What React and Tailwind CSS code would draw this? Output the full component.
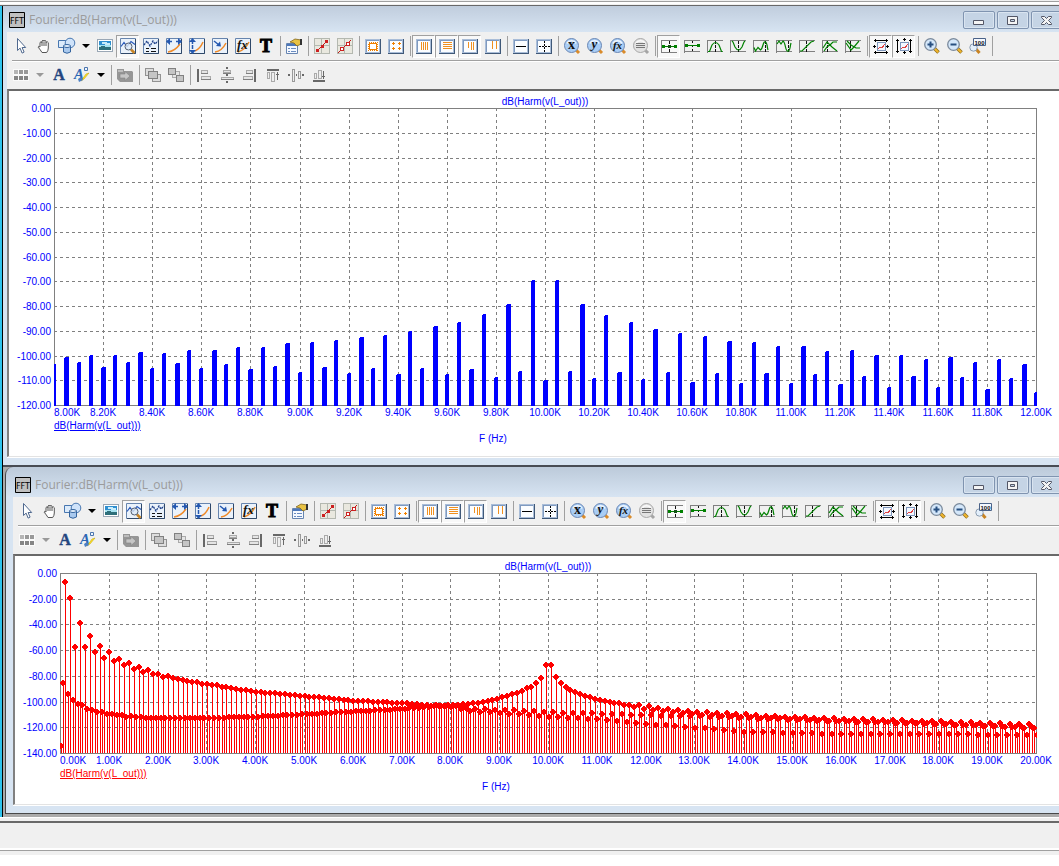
import clsx from 'clsx';

// level of one harmonic series, read off between [kHz, dB] points
const levelAt = (points, f) => {
  const i = points.findIndex(([x]) => x >= f);
  if (i === -1) return points[points.length - 1][1];
  if (i === 0) return points[0][1];
  const [x0, y0] = points[i - 1];
  const [x1, y1] = points[i];
  return y0 + ((y1 - y0) * (f - x0)) / (x1 - x0);
};

// 50 Hz steps from 8 kHz to 12 kHz, dB
const NARROW = [
  -104, -101, -103, -100, -105, -100, -103, -99, -105.5, -99.5, -103.5, -98, -105.5, -98, -104, -97,
  -106, -97, -104.5, -95.5, -107, -95, -105, -94, -107.5, -93, -105.5, -92, -108, -90.5, -105.5, -88.5,
  -108, -87, -106, -83.5, -109, -79.5, -106.5, -70, -110.5, -70, -106.5, -79.5, -109.5, -84, -107, -87,
  -110, -89.5, -107, -91.5, -111, -92.5, -107.5, -94.5, -111.5, -95, -107.5, -96.5, -111.5, -96.5, -108, -98.5,
  -112, -98, -108.5, -100, -113, -100, -108.5, -102, -113, -101, -109, -103, -114, -102, -109.5, -104, -115,
];

const EVEN_A = [[0, -134], [0.2, -19], [0.4, -38], [0.6, -48], [0.8, -56], [1, -61], [1.2, -66], [1.4, -69], [1.6, -72], [1.8, -75], [2, -77.5], [2.4, -81.5], [3, -85.5], [4, -91.5], [5, -95], [6, -98.5], [7, -100.5], [8, -103.5], [8.4, -106.5], [9, -108], [10, -111], [11, -113], [12, -116.5], [13, -119.5], [14, -122.5], [15, -123.5], [16, -124.5], [20, -125]];
const EVEN_B = [[0.1, -6], [0.3, -57], [0.5, -56.5], [0.7, -60.5], [0.9, -65], [1.1, -68], [1.3, -71], [1.5, -73.5], [1.7, -76], [1.9, -77.5], [2.1, -80], [2.5, -82.5], [3, -86], [4, -91.5], [5, -95], [6, -98.5], [7, -100.5], [8, -102.5], [8.5, -105], [9, -105.5], [10, -107.5], [11, -108.5], [12, -110], [13, -110.5], [14, -112], [15, -113.5], [17, -115.5], [18.5, -117.5], [20, -119.5]];
const ODD_A = [[0.05, -85], [0.25, -98], [0.45, -102], [0.65, -106], [1.05, -109], [1.5, -111], [2, -112], [3, -112], [4, -111], [5, -109], [6, -107], [7, -105], [8, -102], [8.5, -100.5], [9, -96.5], [9.3, -93], [9.5, -90], [9.65, -88], [9.75, -85], [9.85, -81], [9.95, -70], [10.05, -71], [10.15, -80], [10.25, -85], [10.35, -88], [10.55, -92], [11, -97.5], [11.5, -101], [12.05, -103], [13, -107], [14, -109], [14.45, -110.5], [16, -112.5], [18, -114.5], [20, -117]];
const ODD_B = [[0.15, -93], [0.35, -101], [0.55, -105], [0.75, -107], [1.15, -110], [1.5, -111.5], [2, -112], [3, -112], [4, -111], [5, -109], [6, -107], [7, -105], [8, -102], [8.5, -100.5], [9, -96.5], [9.3, -93], [9.55, -89], [9.75, -85], [9.95, -70.5], [10.15, -80], [10.35, -88], [10.75, -95], [11, -97.5], [11.5, -101.5], [12.15, -106], [13, -109], [14, -111], [16, -114.5], [18, -116.5], [20, -120]];

const WIDE = Array.from({ length: 401 }, (_, n) => {
  const series = [EVEN_A, ODD_A, EVEN_B, ODD_B][n % 4];
  return levelAt(series, n * 0.05);
});

const LEFT = 45;
const TOP = 17;

const Chart = ({ width, height, plotHeight, xMin, xMax, xStep, yMin, yStep, values, kind, traceClass }) => {
  const plotWidth = width - 68;
  const cols = Math.round((xMax - xMin) / xStep);
  const rows = Math.round(-yMin / yStep);
  const bottom = TOP + plotHeight;
  const xs = Array.from({ length: cols + 1 }, (_, i) => LEFT + Math.round((plotWidth * i) / cols));
  const ys = Array.from({ length: rows + 1 }, (_, i) => TOP + Math.round((plotHeight * i) / rows));
  const points = values.map((v, i) => [
    LEFT + (plotWidth * i) / (values.length - 1),
    TOP + Math.round((plotHeight * v) / yMin),
  ]);
  const clip = `plot-${kind}`;

  return (
    <svg viewBox={`0 0 ${width} ${height}`} className="block h-auto w-full bg-white font-['Liberation_Sans',Arial,sans-serif] text-[10px]" role="img" aria-label="dB(Harm(v(L_out)))">
      <clipPath id={clip}>
        <rect x={LEFT} y={TOP} width={plotWidth + 1} height={plotHeight + 1} />
      </clipPath>
      <g stroke="#808080" fill="none" shapeRendering="crispEdges">
        <g strokeDasharray="3 3">
          {xs.slice(1, -1).map((x) => <path key={x} d={`M${x + 0.5} ${TOP}V${bottom}`} />)}
          {ys.slice(1, -1).map((y) => <path key={y} d={`M${LEFT} ${y + 0.5}H${LEFT + plotWidth}`} />)}
        </g>
        <rect x={LEFT + 0.5} y={TOP + 0.5} width={plotWidth} height={plotHeight} />
      </g>

      <g clipPath={`url(#${clip})`} shapeRendering="crispEdges">
        {kind === 'bars' && points.map(([x, y], i) => {
          const left = Math.round(x - 2);
          const w = i % 3 === 1 ? 5 : 4;
          return (
            <g key={i} fill="#0000ff">
              <rect x={left + 1} y={y - 1} width={w - 1} height="2" />
              <rect x={left} y={y} width={w} height={bottom - y + 1} />
            </g>
          );
        })}
        {kind === 'stems' && points.map(([x, y], i) => {
          const cx = Math.round(x + 0.5);
          return (
            <g key={i} fill="#ff0000">
              <rect x={cx} y={y} width="1" height={bottom - y} />
              <path d={`M${cx - 1} ${y - 2}h2v1h1v1h1v2h-1v1h-1v1h-2v-1h-1v-1h-1v-2h1v-1h1z`} />
            </g>
          );
        })}
      </g>

      <g fill="#0000ff">
        <text x={LEFT + plotWidth / 2} y={TOP - 3} textAnchor="middle">dB(Harm(v(L_out)))</text>
        {ys.map((y, i) => (
          <text key={y} x={LEFT - 3} y={y + 4} textAnchor="end">{i === 0 ? '0.00' : (-i * yStep).toFixed(2)}</text>
        ))}
        {xs.map((x, i) => (
          <text key={x} x={x} y={bottom + 11} textAnchor={i === 0 ? 'start' : 'middle'}>
            {(xMin + i * xStep).toFixed(2)}K
          </text>
        ))}
        <text x={LEFT + plotWidth / 2 - 52} y={bottom + 37} textAnchor="middle">F (Hz)</text>
      </g>
      <text x={LEFT} y={bottom + 24} className={clsx('underline', traceClass)}>dB(Harm(v(L_out)))</text>
    </svg>
  );
};

const Icon = ({ children, crisp }) => (
  <svg width="16" height="16" viewBox="0 0 16 16" fill="none" className="overflow-visible" shapeRendering={crisp ? 'crispEdges' : undefined} aria-hidden="true">
    {children}
  </svg>
);

// small bevelled panel used by the grid and marker icons
const Panel = ({ children }) => (
  <Icon crisp>
    <path d="M0 1h16v15H0z" fill="#3f5878" />
    <path d="M0 1h15v14H0z" fill="#a9bdd8" />
    <path d="M1 2h13v12H1z" fill="#7f9ac0" />
    <path d="M2 3h12v11H2z" fill="#fbfdff" />
    {children}
  </Icon>
);

const Plot = ({ children }) => (
  <Icon>
    <path d="M.5.5h15v15H.5z" fill="#eaf2fb" stroke="#6785ae" />
    <path d="M15.500 1v14.500H1" stroke="#2f4869" />
    {children}
  </Icon>
);

const Wave = ({ d, cursor }) => (
  <Icon crisp>
    <path d="M.5 2v13M1 2.500h15M1 13.500h15" stroke="#808080" />
    <path d={`M${cursor + 0.5} 3v11`} stroke="#111" strokeDasharray="3 1" />
    <path d={d} stroke="#008000" strokeWidth="1.200" shapeRendering="auto" />
  </Icon>
);

const Lens = ({ children, gray }) => (
  <Icon>
    <path d="M12 12l3 3" stroke={gray ? '#a5a5a5' : '#d98b2b'} strokeWidth="3" />
    <circle cx="7.500" cy="7.500" r="7" fill={gray ? '#e2e2e2' : '#a9cdf5'} stroke={gray ? '#a8a8a8' : '#6b87b4'} />
    <path d="M3 5.500a5 5 0 0 1 9 0" stroke="#fff" strokeWidth="1.500" opacity=".8" />
    {children}
  </Icon>
);

const Glass = ({ children }) => (
  <Icon>
    <path d="M10 10l4.500 4.500" stroke="#8a6a1c" strokeWidth="3.600" />
    <path d="M10 10l4.200 4.200" stroke="#f0b52d" strokeWidth="2.200" />
    <circle cx="6.500" cy="6.500" r="5.800" fill="#d4e7fa" stroke="#7b8a9c" strokeWidth="1.300" />
    {children}
  </Icon>
);

const serifItalic = "font-['Liberation_Serif',serif] font-bold italic";

const icons = {
  Select: <Icon><path d="M4.500.5v12l2.600-2.400 2 5 2-1-2-4.600h3.600z" fill="#fff" stroke="#50698f" /></Icon>,
  Pan: (
    <Icon>
      <path d="M4 9V4.500q1-1.500 2 0V3q1-1.500 2 0 1-1.500 2 .3v1q1.500-1.200 2.300.4V10q0 2.500-1.600 4.500H6Q4.500 12 2.200 9.200q0-1.600 1.800-.2z" fill="#fff" stroke="#555" />
      <path d="M6 4v4M8 3.500V8M10 4v4" stroke="#555" />
    </Icon>
  ),
  Shapes: (
    <Icon>
      <path d="M-.5 2.500h10v7h-10z" fill="#dcebfb" stroke="#4877b0" />
      <circle cx="11" cy="5" r="4.800" fill="#cfe3fa" stroke="#4877b0" />
      <path d="M4.500 8v6q3.500 2.500 7 0V8z" fill="#a9c9ee" stroke="#34649e" />
      <ellipse cx="8" cy="8" rx="3.500" ry="1.500" fill="#e6f1fd" stroke="#34649e" />
    </Icon>
  ),
  Picture: (
    <Icon crisp>
      <path d="M0 1h16v13H0z" fill="#9aa7b5" /><path d="M1 2h14v11H1z" fill="#fff" />
      <path d="M2 3h12v9H2z" fill="#2f8fd0" /><path d="M5 4h5v1h3v2H8V6H5z" fill="#c8ecfa" />
      <path d="M2 7h12v2H2z" fill="#a5e2f0" /><path d="M2 9l4-1 3 1h5v3H2z" fill="#2d6f7a" />
    </Icon>
  ),
  Scope: (
    <Plot>
      <path d="M1 8.500l3-4 3 4 4-5 4 3" stroke="#2858b8" strokeWidth="1.200" />
      <path d="M11 11.500l3.500 3.500" stroke="#c78324" strokeWidth="2.500" />
      <circle cx="8.500" cy="8.500" r="3.500" fill="#ddeaf8" fillOpacity=".8" stroke="#555f70" />
    </Plot>
  ),
  Panels: (
    <Plot>
      <path d="M1 7l3-4 3 5 3-5 2 3 3-3" stroke="#1d3f88" strokeDasharray="2 1" strokeWidth="1.300" />
      <path d="M3 10.500h3M8 10.500h5M3 13.500h3M8 13.500h5" stroke="#111" shapeRendering="crispEdges" />
    </Plot>
  ),
  'Fit width': (
    <Plot>
      <path d="M2 14q7-1 12-8" stroke="#f08a28" strokeWidth="1.500" />
      <path d="M1 3.500h5M10 3.500h5" stroke="#2458b0" strokeWidth="1.500" /><path d="M0 3.500l4-3.500v7zM16 3.500l-4-3.500v7z" fill="#2458b0" />
    </Plot>
  ),
  'Fit height': (
    <Plot>
      <path d="M6 13q5-2 8-9" stroke="#f08a28" strokeWidth="1.500" />
      <path d="M3.500 2v12" stroke="#2458b0" strokeDasharray="4 1" strokeWidth="1.500" /><path d="M3.500 0l3.500 4H0zM3.500 16l3.500-4H0z" fill="#2458b0" />
    </Plot>
  ),
  'Scale to point': (
    <Plot>
      <path d="M3 14q7-1 11-9" stroke="#f08a28" strokeWidth="1.500" />
      <path d="M2 3l5 4" stroke="#2458b0" strokeWidth="1.500" /><path d="M9 8.500l-1-5-4 4.500z" fill="#2458b0" />
    </Plot>
  ),
  Function: (
    <Plot>
      <path d="M3 14q7-2 11-10" stroke="#f08a28" strokeWidth="1.500" />
      <text x="2" y="11" className={clsx(serifItalic, 'text-[13px]')} fill="#111">fx</text>
    </Plot>
  ),
  Text: <Icon><text x="8" y="14" textAnchor="middle" className="font-['Liberation_Serif',serif] text-[18px] font-bold" fill="#000" stroke="#000">T</text></Icon>,
  Properties: (
    <Icon>
      <path d="M.5 5.500h11v10H.5z" fill="#f5f9ff" stroke="#6684b0" />
      <path d="M1 7h10" stroke="#4d78bb" strokeWidth="2" /><path d="M2 10.500h2M5 10.500h5M2 13.500h2M5 13.500h5" stroke="#6b8cc0" />
      <path d="M4 4l5-3 6 1v4l-4 2-3-3z" fill="#e8c244" stroke="#80651c" strokeWidth=".8" />
      <path d="M14 1h2v6h-2z" fill="#333" />
    </Icon>
  ),
  'Data points': (
    <Icon crisp>
      <path d="M0 0h16v16H0z" fill="#b4b8b0" /><path d="M1 1h6v6H1zM8 1h7v6H8zM1 8h6v7H1zM8 8h7v7H8z" fill="#e9e8df" />
      <path d="M2 14L14 2" stroke="#c01818" /><path d="M2 11h3v3H2zM7 7h3v3H7zM11 2h3v3h-3z" fill="#cc2020" />
    </Icon>
  ),
  Tokens: (
    <Icon crisp>
      <path d="M0 0h16v16H0z" fill="#b4b8b0" /><path d="M1 1h6v6H1zM8 1h7v6H8zM1 8h6v7H1zM8 8h7v7H8z" fill="#e9e8df" />
      <path d="M1 15L14 2" stroke="#c01818" /><path d="M3.500 9.500h3v3h-3zM9.500 4.500h3v3h-3z" fill="#fff" stroke="#cc2020" />
    </Icon>
  ),
  Ruler: <Panel><path d="M3.500 4.500h9v8h-9z" stroke="#f08000" strokeDasharray="1 1" /><path d="M4.500 5.500h7v6h-7z" stroke="#f08000" fill="#fff" /></Panel>,
  'Plus marks': <Panel><path d="M4 5.500h3M5.500 4v3M10 5.500h3M11.500 4v3M4 10.500h3M5.500 9v3M10 10.500h3M11.500 9v3" stroke="#f08000" /></Panel>,
  'Vertical grid': <Panel><path d="M5.500 4v8M7.500 4v8M9.500 4v8M11.500 4v8" stroke="#f09020" /></Panel>,
  'Horizontal grid': <Panel><path d="M4 4.500h9M4 6.500h9M4 8.500h9M4 10.500h9" stroke="#f09020" /></Panel>,
  'Minor grid': <Panel><path d="M6.500 4v6M9.500 4v8M11.500 4v8" stroke="#f09020" /></Panel>,
  'Minor log grid': <Panel><path d="M7.500 3v8M11.500 3v8" stroke="#f09020" /></Panel>,
  Baseline: <Panel><path d="M3 8.500h10" stroke="#000" /></Panel>,
  Tracker: <Panel><path d="M3 8.500h11M8.500 3v11" stroke="#000" strokeDasharray="2 1" /></Panel>,
  'Find X': <Lens><text x="7.500" y="11" textAnchor="middle" className="font-['Liberation_Serif',serif] text-[14px] font-bold" fill="#111">x</text></Lens>,
  'Find Y': <Lens><text x="7.500" y="10" textAnchor="middle" className={clsx(serifItalic, 'text-[13px]')} fill="#111">y</text></Lens>,
  'Find function': <Lens><text x="7.500" y="11" textAnchor="middle" className={clsx(serifItalic, 'text-[11px]')} fill="#111">fx</text></Lens>,
  'Find list': <Lens gray><path d="M3 5.500h9M3 7.500h9M3 9.500h9" stroke="#777" /></Lens>,
  'Left cursor': <Icon crisp><path d="M.5 2v13M1 2.500h15M1 14.500h15" stroke="#808080" /><path d="M8.500 3v11" stroke="#111" strokeDasharray="3 1" /><path d="M1 8.500h15" stroke="#008000" /><path d="M1 7h3v3H1zM13 7h3v3h-3z" fill="#008000" /><path d="M7 7h3v3H7z" fill="#135013" /></Icon>,
  'Right cursor': <Icon crisp><path d="M.5 2v13M1 2.500h15M1 13.500h15" stroke="#808080" /><path d="M8.500 3v11" stroke="#111" strokeDasharray="2 2" /><path d="M1 7.500h15" stroke="#008000" /><path d="M1 6h3v3H1zM13 6h3v3h-3z" fill="#008000" /></Icon>,
  Peak: <Wave cursor={8} d="M1 13.500h1.500L5 7q3.500-5 7 0l2.500 6.500h1" />,
  Valley: <Wave cursor={8} d="M2 3l1 1 2 5q3.500 6 7 0l2-5 1-1" />,
  High: <Wave cursor={12} d="M1 9.500L2.500 13 5 9.500 7.500 12q1.500-1 2.500-5t2.500-3q1.500 1 2 6l.5 2" />,
  Low: <Wave cursor={12} d="M1 6l2-3 2 3 2-3q1.500 1 2.500 6t3 4q1.500-1 2-6l.5-2" />,
  Inflection: <Wave cursor={7} d="M1 13h2l9-9 3-1" />,
  'Global high': <Wave cursor={5} d="M1 10l4-6 5 5 5 4M2 13l3-4 4-3 2-2h4" />,
  'Global low': <Wave cursor={5} d="M1 5l5 7 3-3 5-6M2 3l4 4 5 3h4" />,
  'Tag horizontal': (
    <Icon crisp>
      <path d="M1 2.500h14M1 14.500h14M0 8.500h3M13 8.500h3M2.500 1v3M13.500 1v3M2.500 13v3M13.500 13v3M1.500 7v3M14.500 7v3" stroke="#000" />
      <path d="M4 4h9v9H4z" fill="#7d95ba" /><path d="M5 5h7v7H5z" fill="#f3f7ff" /><path d="M5 11l2-2 2 1 3-4" stroke="#e04040" />
    </Icon>
  ),
  'Tag vertical': (
    <Icon crisp>
      <path d="M1.500 1v14M14.500 1v14M8.500 0v3M8.500 13v3M0 2.500h3M0 13.500h3M13 2.500h3M13 13.500h3M7 1.500h3M7 14.500h3" stroke="#000" />
      <path d="M4 4h9v9H4z" fill="#7d95ba" /><path d="M5 5h7v7H5z" fill="#f3f7ff" /><path d="M5 11l2-2 2 1 3-4" stroke="#e04040" />
    </Icon>
  ),
  'Zoom in': <Glass><path d="M6.500 3.500v6M3.500 6.500h6" stroke="#274f80" strokeWidth="2" /></Glass>,
  'Zoom out': <Glass><path d="M3.500 6.500h6" stroke="#274f80" strokeWidth="2" /></Glass>,
  'Zoom 100': (
    <Icon>
      <path d="M6 11l3.500 4" stroke="#c88322" strokeWidth="3" />
      <circle cx="3.500" cy="9.500" r="3.700" fill="#e3effb" stroke="#8b9cb0" />
      <path d="M3.500.5h12v7h-12z" fill="#f4f8ff" stroke="#4b6288" />
      <text x="9.500" y="6.500" textAnchor="middle" className="font-['Liberation_Sans',Arial,sans-serif] text-[6px] font-bold" fill="#111">100</text>
    </Icon>
  ),
  Colors: <Icon crisp><path d="M0 2h16v12H0z" fill="#fafafa" /><path d="M1 3h4v4H1z" fill="#b5b5b5" /><path d="M6 3h4v4H6zM11 3h4v4h-4z" fill="#999" /><path d="M1 9h4v4H1zM6 9h4v4H6zM11 9h4v4h-4z" fill="#858585" /></Icon>,
  Font: <Icon><text x="8" y="13" textAnchor="middle" className="font-['Liberation_Serif',serif] text-[16px] font-bold" fill="#23457f" stroke="#23457f" strokeWidth=".4">A</text></Icon>,
  'Text style': (
    <Icon>
      <text x="0" y="12" className={clsx(serifItalic, 'text-[15px]')} fill="#2c66b4">A</text>
      <path d="M10.500.5h3v3h-3z" fill="#eef5ff" stroke="#4c76ae" />
      <path d="M15 6l-5 6-3 2 5-7z" fill="#ffe026" stroke="#bda000" strokeWidth=".5" /><path d="M4 12l3-2 2 3-4 2z" fill="#4b7fc4" />
    </Icon>
  ),
  Send: <Icon><path d="M0 2h7v2h8l1 1v10H3L0 12z" fill="#969696" /><path d="M1 3h5v2H1z" fill="#bdbdbd" /><path d="M3 7h5V4.500l5 4.500-5 4.500V11H3z" fill="#c6c6c6" stroke="#858585" strokeWidth=".6" /></Icon>,
  'Bring front': <Icon crisp><path d="M.5 1.500h8v7h-8zM7.500 7.500h8v7h-8z" fill="#ddd" stroke="#929292" /><path d="M3.500 4.500h9v7h-9z" fill="#c5c5c5" stroke="#808080" /></Icon>,
  'Send back': <Icon crisp><path d="M4.500 4.500h7v6h-7z" fill="#e5e5e5" stroke="#aaa" /><path d="M.5 1.500h7v6h-7zM8.500 8.500h7v6h-7z" fill="#c5c5c5" stroke="#808080" /></Icon>,
  'Align left': <Icon crisp><path d="M2 2v13" stroke="#686868" strokeWidth="2" /><path d="M5.500 3.500h6v3h-6zM5.500 9.500h9v3h-9z" fill="#e5e5e5" stroke="#aaa" /><path d="M5 6.500h7M5 12.500h10" stroke="#808080" /></Icon>,
  'Align center': <Icon crisp><path d="M8 0v2M8 7v2M8 14v2" stroke="#686868" strokeWidth="2" /><path d="M4.500 3.500h7v2h-7zM2.500 10.500h12v2h-12z" fill="#e5e5e5" stroke="#aaa" /><path d="M4 6.500h8M2 12.500h13" stroke="#808080" /></Icon>,
  'Align right': <Icon crisp><path d="M13 2v13" stroke="#686868" strokeWidth="2" /><path d="M4.500 3.500h6v3h-6zM1.500 9.500h9v3h-9z" fill="#e5e5e5" stroke="#aaa" /><path d="M4 6.500h7M1 12.500h10" stroke="#808080" /></Icon>,
  'Align top': <Icon crisp><path d="M2 3h12" stroke="#686868" strokeWidth="2" /><path d="M2.500 5.500h2v6h-2zM6.500 5.500h3v9h-3z" fill="#eee" stroke="#aaa" /><path d="M12.500 5v8M11 7.500h3" stroke="#686868" /></Icon>,
  'Align middle': <Icon crisp><path d="M0 8h2M8 8h1M14 8h2" stroke="#686868" strokeWidth="2" /><path d="M4.500 2.500h2v12h-2zM10.500 4.500h2v7h-2z" fill="#eee" stroke="#999" /></Icon>,
  'Align bottom': <Icon crisp><path d="M2 14h12" stroke="#686868" strokeWidth="2" /><path d="M3.500 6.500h2v5h-2zM7.500 3.500h3v8h-3z" fill="#eee" stroke="#aaa" /><path d="M12.500 4v8M11 9.500h3" stroke="#686868" /></Icon>,
};

const pressed = ['Scope', 'Vertical grid', 'Horizontal grid', 'Minor grid', 'Left cursor', 'Tag horizontal', 'Tag vertical'];

const rowOne = [
  'Select', 'Pan', 'Shapes', 'v', 'Picture', 'Scope', 'Panels', 'Fit width', 'Fit height', 'Scale to point', 'Function', 'Text', '|',
  'Properties', '|', 'Data points', 'Tokens', '|', 'Ruler', 'Plus marks', '|',
  'Vertical grid', 'Horizontal grid', 'Minor grid', 'Minor log grid', '|', 'Baseline', 'Tracker', '|',
  'Find X', 'Find Y', 'Find function', 'Find list', '|',
  'Left cursor', 'Right cursor', 'Peak', 'Valley', 'High', 'Low', 'Inflection', 'Global high', 'Global low', '|',
  'Tag horizontal', 'Tag vertical', '|', 'Zoom in', 'Zoom out', 'Zoom 100', '|',
];

const rowTwo = [
  'Colors', 'v-off', 'Font', 'Text style', 'v', '|', 'Send', '|', 'Bring front', 'Send back', '|',
  'Align left', 'Align center', 'Align right', 'Align top', 'Align middle', 'Align bottom',
];

const Toolbar = ({ items, className }) => (
  <div className={clsx('flex items-center bg-[#f0f0f0] pl-[2px]', className)} role="toolbar">
    {items.map((name, i) => {
      if (name === '|') return <span key={i} className="mr-px ml-[3px] h-5 w-px shrink-0 bg-[#a0a0a0]" />;
      if (name.startsWith('v')) {
        return (
          <button key={i} aria-label="More" className="flex h-6 w-[15px] shrink-0 items-center justify-center">
            <svg width="8" height="4" viewBox="0 0 8 4" aria-hidden="true">
              <path d="M0 0h8L4 4z" fill={name === 'v' ? '#000' : '#999'} />
            </svg>
          </button>
        );
      }
      const on = pressed.includes(name);
      return (
        <button
          key={i}
          aria-label={name}
          aria-pressed={on}
          className={clsx(
            'flex h-[23px] w-[23px] shrink-0 items-center justify-center border',
            on ? 'border-t-[#a0a0a0] border-r-white border-b-white border-l-[#a0a0a0] bg-[#f8f8f8]' : 'border-transparent'
          )}
        >
          {icons[name]}
        </button>
      );
    })}
  </div>
);

const CaptionButton = ({ label, children }) => (
  <button aria-label={label} className="flex h-[18px] w-8 shrink-0 items-center justify-center rounded-xs border border-[#8094b0] bg-[#c5d4e5] shadow-[inset_0_0_0_1px_#d9e4f0]">
    <svg width="12" height="11" viewBox="0 0 12 11" aria-hidden="true">{children}</svg>
  </button>
);

const ChartWindow = ({ title, children }) => (
  <section className="overflow-hidden">
    <header className="flex h-[26px] items-center gap-1 pt-[2px] pl-[2px]">
      <svg width="16" height="16" viewBox="0 0 16 16" className="shrink-0" aria-hidden="true">
        <path d="M.5.5h15v15H.5z" fill="#c0c0c0" stroke="#000" />
        <text x="8" y="12" textAnchor="middle" className="font-['DejaVu_Sans_Condensed','DejaVu_Sans',sans-serif] text-[9px]" fill="#000">FFT</text>
      </svg>
      <h2 className="grow truncate font-['Open_Sans',sans-serif] text-xs leading-4 text-[#9b9b9b]">{title}</h2>
      <div className="-mr-1 flex gap-[2px]">
        <CaptionButton label="Minimize"><path d="M.5 5.500h10v4h-10z" fill="#f4f4f4" stroke="#535666" /></CaptionButton>
        <CaptionButton label="Restore">
          <path d="M.5 1.500h10v8h-10z" fill="#f4f4f4" stroke="#535666" /><path d="M3.500 4.500h4v2h-4z" fill="#c5d4e5" stroke="#535666" />
        </CaptionButton>
        <CaptionButton label="Close">
          <path d="M.5 1.500h3l2 2 2-2h3v1l-3 3 3 3v1h-3l-2-2-2 2h-3v-1l3-3-3-3z" fill="#f4f4f4" stroke="#535666" />
        </CaptionButton>
      </div>
    </header>
    <Toolbar items={rowOne} className="h-7" />
    <div className="bg-[#f0f0f0] pl-[5px]">
      <div className="h-[2px] border-t border-[#a0a0a0] bg-white" />
    </div>
    <Toolbar items={rowTwo} className="h-[27px] pb-[2px]" />
    <div className="border-t-2 border-b border-l-2 border-t-[#696969] border-b-[#e3e3e3] border-l-[#808080]">
      {children}
    </div>
    <div className="h-2 border-t border-white" />
  </section>
);

const App = () => (
  <main className="min-h-screen overflow-hidden bg-white">
    <div className="h-[6px] border-b border-[#696969] bg-[#f0f0f0] pt-px">
      <div className="h-px bg-[#a0a0a0]" />
      <div className="h-[2px] bg-white" />
    </div>
    <div className="flex bg-[#ababab]">
      <div className="w-[3px] shrink-0 border-r border-black bg-[#2fc4ee]" />
      <div className="min-w-0 grow">
        <div className="border-b-2 border-[#484c54] bg-[#d7e4f2] bg-linear-to-b from-[#c0cddd] to-[#d7e4f2] to-[26px] pl-1">
          <ChartWindow title="Fourier:dB(Harm(v(L_out)))">
            <Chart width={1050} height={365} plotHeight={297} xMin={8} xMax={12} xStep={0.2} yMin={-120} yStep={10} values={NARROW} kind="bars" traceClass="fill-[#0000ff]" />
          </ChartWindow>
        </div>
        <div className="pl-[2px]">
          <div className="rounded-tl-lg border-b border-l border-[#484848] bg-[#d7e4f2] bg-linear-to-b from-[#bccada] to-[#d7e4f2] to-[30px] pt-1 pl-[7px]">
            <ChartWindow title="Fourier:dB(Harm(v(L_out)))">
              <Chart width={1044} height={248} plotHeight={180} xMin={0} xMax={20} xStep={1} yMin={-140} yStep={20} values={WIDE} kind="stems" traceClass="fill-[#ff0000]" />
            </ChartWindow>
          </div>
        </div>
        <div className="h-[3px]" />
      </div>
    </div>
    <footer className="bg-[#f0f0f0]">
      <div className="h-[6px] border-t border-b-2 border-t-white border-b-[#696969]" />
      <div className="h-[27px] border-b-2 border-white" />
      <div className="h-[5px] border-t border-[#a0a0a0]" />
    </footer>
  </main>
);

export default App;
